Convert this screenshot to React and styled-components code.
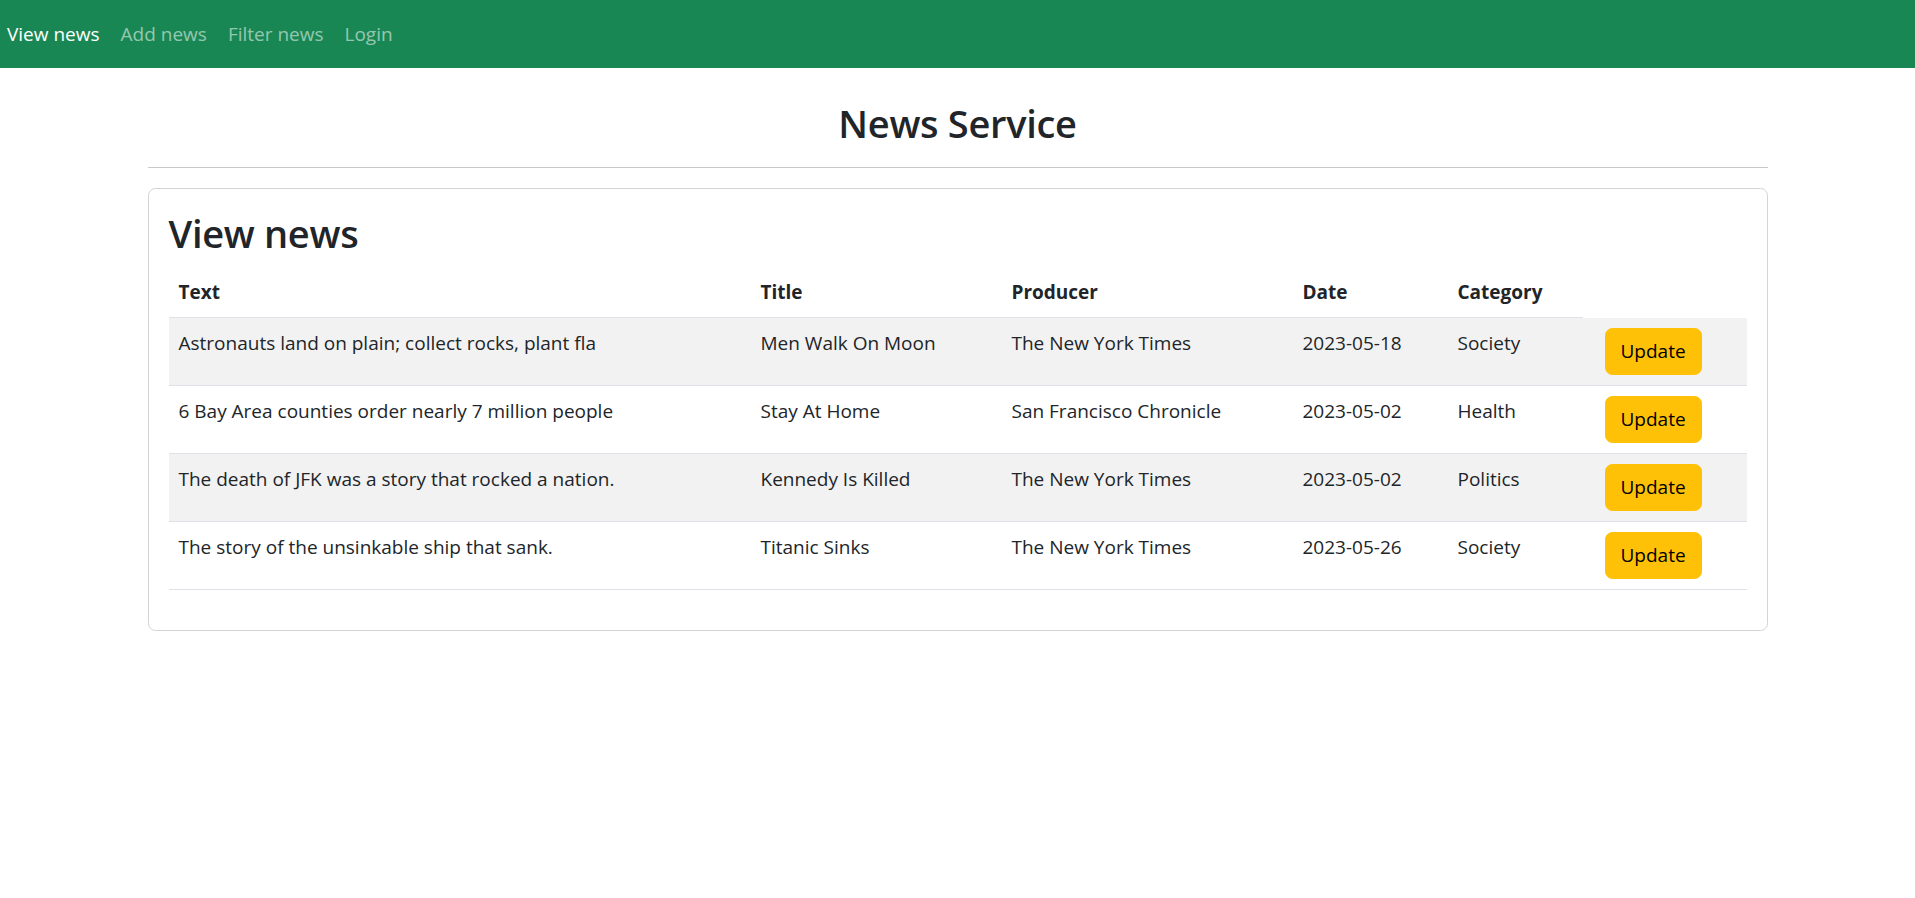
import styled, { createGlobalStyle } from 'styled-components';

const news = [
  {
    text: 'Astronauts land on plain; collect rocks, plant fla',
    title: 'Men Walk On Moon',
    producer: 'The New York Times',
    date: '2023-05-18',
    category: 'Society',
  },
  {
    text: '6 Bay Area counties order nearly 7 million people',
    title: 'Stay At Home',
    producer: 'San Francisco Chronicle',
    date: '2023-05-02',
    category: 'Health',
  },
  {
    text: 'The death of JFK was a story that rocked a nation.',
    title: 'Kennedy Is Killed',
    producer: 'The New York Times',
    date: '2023-05-02',
    category: 'Politics',
  },
  {
    text: 'The story of the unsinkable ship that sank.',
    title: 'Titanic Sinks',
    producer: 'The New York Times',
    date: '2023-05-26',
    category: 'Society',
  },
];

const columns = [
  { label: 'Text', width: 582 },
  { label: 'Title', width: 251 },
  { label: 'Producer', width: 291 },
  { label: 'Date', width: 155 },
  { label: 'Category', width: 135 },
];

const App = () => {
  return (
    <>
      <GlobalStyle />
      <Navbar>
        <NavLink $active>View news</NavLink>
        <NavLink>Add news</NavLink>
        <NavLink>Filter news</NavLink>
        <NavLink>Login</NavLink>
      </Navbar>
      <Container>
        <PageTitle>News Service</PageTitle>
        <Divider />
        <Card>
          <CardTitle>View news</CardTitle>
          <Table>
            <colgroup>
              {columns.map((c) => (
                <col key={c.label} style={{ width: c.width }} />
              ))}
              <col />
            </colgroup>
            <thead>
              <tr>
                {columns.map((c) => (
                  <Th key={c.label}>{c.label}</Th>
                ))}
              </tr>
            </thead>
            <tbody>
              {news.map((n, i) => (
                <Row key={i} $striped={i % 2 === 0}>
                  <Td>{n.text}</Td>
                  <Td>{n.title}</Td>
                  <Td>{n.producer}</Td>
                  <Td>{n.date}</Td>
                  <Td>{n.category}</Td>
                  <ActionCell>
                    <UpdateButton type="button">Update</UpdateButton>
                  </ActionCell>
                </Row>
              ))}
            </tbody>
          </Table>
        </Card>
      </Container>
    </>
  );
};

export default App;

const GlobalStyle = createGlobalStyle`
  body {
    margin: 0;
    font-family: "Segoe UI", "Open Sans", "Noto Sans", sans-serif;
    font-size: 19px;
    line-height: 30px;
    color: #212529;
    background: #fff;
  }
`;

const Navbar = styled.nav`
  display: flex;
  align-items: center;
  height: 68px;
  padding-left: 7px;
  gap: 21px;
  background-color: #198754;
`;

const NavLink = styled.a`
  font-size: 19px;
  line-height: 30px;
  color: ${(p) => (p.$active ? '#fff' : 'rgba(255, 255, 255, 0.55)')};
  cursor: pointer;
`;

const Container = styled.div`
  width: 1620px;
  margin: 0 auto;
  padding-top: 31px;
`;

const PageTitle = styled.h2`
  margin: 0;
  font-size: 38px;
  line-height: 48px;
  font-weight: 600;
  letter-spacing: -0.3px;
  text-align: center;
`;

const Divider = styled.hr`
  margin: 20px 0;
  border: 0;
  border-top: 1px solid #c8c9ca;
`;

const Card = styled.div`
  border: 1px solid #d3d4d5;
  border-radius: 7.5px;
  padding: 20px;
`;

const CardTitle = styled.h2`
  margin: 0 0 10px;
  font-size: 38px;
  line-height: 48px;
  font-weight: 600;
  letter-spacing: -0.3px;
`;

const Table = styled.table`
  width: 100%;
  table-layout: fixed;
  border-collapse: collapse;
  margin-bottom: 20px;
`;

const Th = styled.th`
  text-align: left;
  font-weight: 700;
  padding: 10px;
  border-bottom: 1px solid #dee2e6;
  vertical-align: top;
`;

const Row = styled.tr`
  background-color: ${(p) => (p.$striped ? '#f2f2f2' : '#fff')};
  border-bottom: 1px solid #dee2e6;
`;

const Td = styled.td`
  padding: 10px;
  vertical-align: top;
`;

const ActionCell = styled(Td)`
  padding-left: 22px;
`;

const UpdateButton = styled.button`
  font-family: inherit;
  font-size: 19px;
  line-height: 30px;
  padding: 7.5px 15px;
  border: 1px solid #ffc107;
  border-radius: 7.5px;
  background-color: #ffc107;
  color: #000;
  cursor: pointer;
`;
